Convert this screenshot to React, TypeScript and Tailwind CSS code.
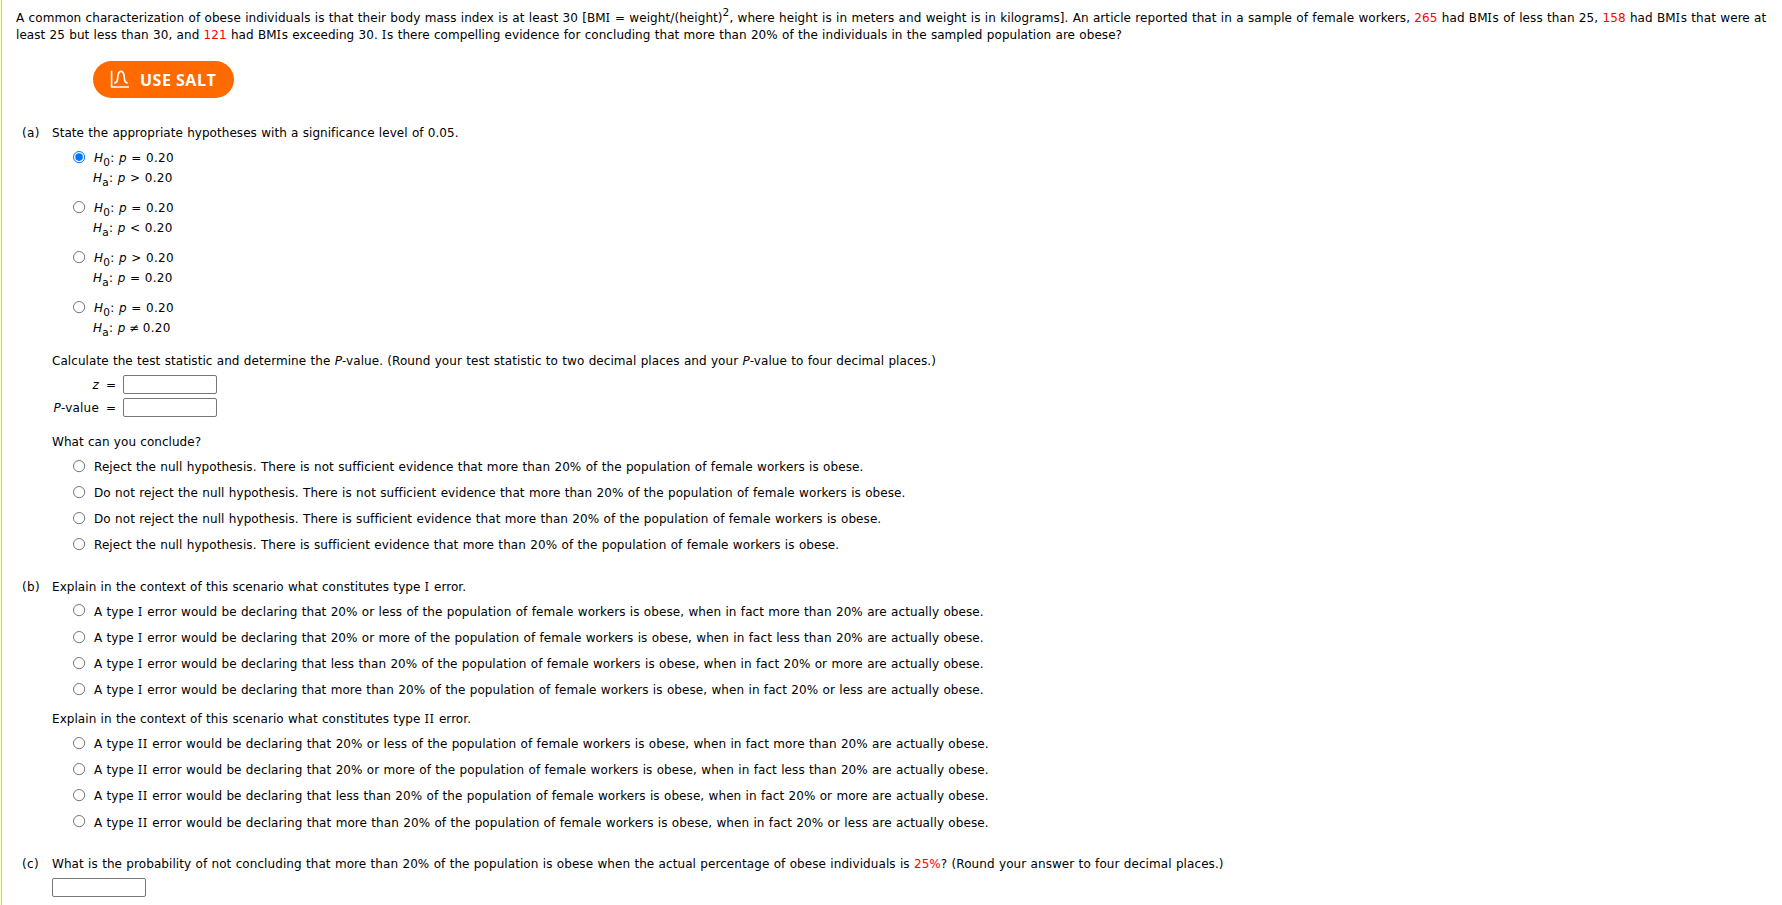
import { Fragment, type ReactNode } from "react";

function Serifed({ text }: { text: string }) {
  const parts = text.split("I");
  return (
    <>
      {parts.map((part, i) => (
        <Fragment key={i}>
          {i > 0 && <span className="font-['Noto_Sans'] tracking-[0.9px] leading-none">I</span>}
          {part}
        </Fragment>
      ))}
    </>
  );
}

function Line({ className = "", children }: { className?: string; children: ReactNode }) {
  return <div className={`h-[17px] whitespace-nowrap ${className}`}>{children}</div>;
}

function Radio({ checked = false, className = "" }: { checked?: boolean; className?: string }) {
  return (
    <svg className={`w-[13px] h-[13px] shrink-0 ${className}`} viewBox="0 0 13 13">
      <circle cx="6.1" cy="6.1" r="5.6" fill="#fff" stroke={checked ? "#0075ff" : "#767676"} strokeWidth="1" />
      {checked && <circle cx="6.1" cy="6.1" r="3.8" fill="#0075ff" />}
    </svg>
  );
}

function Choice({ text, className = "", radioClass = "mt-px" }: { text: string; className?: string; radioClass?: string }) {
  return (
    <div className={`flex h-[17px] pl-[21px] ${className}`}>
      <Radio className={radioClass} />
      <Line className="pl-2">
        <Serifed text={text} />
      </Line>
    </div>
  );
}

function Hypothesis({ sub, op }: { sub: string; op: string }) {
  return (
    <Line className="tracking-[0.25px]">
      <i>H</i>
      <sub className="text-[10.5px] bottom-[-4px]">{sub}</sub>: <i>p</i>{" "}
      <span className={op === "≠" ? "-mx-px" : ""}>{op}</span> 0.20
    </Line>
  );
}

function HypothesisPair({ ops, checked }: { ops: [string, string]; checked?: boolean }) {
  return (
    <div className="flex h-[50px] pl-[21px]">
      <Radio checked={checked} className="mt-px" />
      <div className="flex flex-col gap-[3px] pl-[7px]">
        <div className="pl-px">
          <Hypothesis sub="0" op={ops[0]} />
        </div>
        <Hypothesis sub="a" op={ops[1]} />
      </div>
    </div>
  );
}

function Part({ label, className = "", children }: { label: string; className?: string; children: ReactNode }) {
  return (
    <section className={`flex ${className}`}>
      <div className="w-[30px] shrink-0 tracking-[0.4px]">{label}</div>
      <div>{children}</div>
    </section>
  );
}

function Field({ className = "" }: { className?: string }) {
  return (
    <input
      aria-label="answer"
      className={`block w-[94px] h-[19px] rounded-[2px] border border-[#767676] bg-white ${className}`}
    />
  );
}

const hypotheses: [string, string][] = [
  ["=", ">"],
  ["=", "<"],
  [">", "="],
  ["=", "≠"],
];

const conclusions = [
  "Reject the null hypothesis. There is not sufficient evidence that more than 20% of the population of female workers is obese.",
  "Do not reject the null hypothesis. There is not sufficient evidence that more than 20% of the population of female workers is obese.",
  "Do not reject the null hypothesis. There is sufficient evidence that more than 20% of the population of female workers is obese.",
  "Reject the null hypothesis. There is sufficient evidence that more than 20% of the population of female workers is obese.",
];

const errorCases = [
  "20% or less of the population of female workers is obese, when in fact more than 20% are actually obese.",
  "20% or more of the population of female workers is obese, when in fact less than 20% are actually obese.",
  "less than 20% of the population of female workers is obese, when in fact 20% or more are actually obese.",
  "more than 20% of the population of female workers is obese, when in fact 20% or less are actually obese.",
];

function Red({ children }: { children: ReactNode }) {
  return <span className="text-[#ff0000]">{children}</span>;
}

export default function App() {
  return (
    <div className="flex h-[905px] overflow-hidden bg-white text-black font-['DejaVu_Sans',sans-serif] text-[12px] leading-[17px] tracking-[0.08px] [word-spacing:0.4px]">
      <div className="w-[2px] shrink-0 border-r border-[#c8c8b4] bg-[#ffffcc]" />
      <main className="pl-[14px] pt-[10px]">
        <Line className="tracking-[0.075px]">
          <Serifed text="A common characterization of obese individuals is that their body mass index is at least 30 [BMI = weight/(height)" />
          <sup className="text-[10.5px] top-[-6px]">2</sup>
          <Serifed text=", where height is in meters and weight is in kilograms]. An article reported that in a sample of female workers, " />
          <Red>265</Red>
          <Serifed text=" had BMIs of less than 25, " />
          <Red>158</Red>
          <Serifed text=" had BMIs that were at" />
        </Line>
        <Line className="tracking-[0.055px]">
          least 25 but less than 30, and <Red>121</Red>
          <Serifed text=" had BMIs exceeding 30. Is there compelling evidence for concluding that more than 20% of the individuals in the sampled population are obese?" />
        </Line>

        <button className="mt-[17px] ml-[77px] flex h-[37px] w-[141px] items-center rounded-full bg-[#ff6a00] pl-[17px] text-white">
          <svg className="w-[20px] h-[19px]" viewBox="0 0 20 19" fill="none" stroke="white" strokeWidth="1.6">
            <path d="M1.6 0.8v16.2H19" />
            <path d="M4.3 12.9c2.7 0 3.2-1.6 3.4-5 .2-4.400.9-6.500 3.300-6.500s3.100 2.100 3.300 6.500c.2 3.400.7 5 3.400 5" />
          </svg>
          <span className="ml-[10px] pt-[2px] whitespace-nowrap font-['Open_Sans'] text-[16px] font-bold tracking-[0.5px]">USE SALT</span>
        </button>

        <Part label="(a)" className="mt-[27px] pl-[6px]">
          <Line className="tracking-[0.05px]">State the appropriate hypotheses with a significance level of 0.05.</Line>
          <div className="mt-2">
            {hypotheses.map((ops, i) => (
              <HypothesisPair key={i} ops={ops} checked={i === 0} />
            ))}
          </div>
          <Line className="mt-[3px] tracking-[0.065px]">
            Calculate the test statistic and determine the <i>P</i>-value. (Round your test statistic to two decimal places and your <i>P</i>-value to four decimal places.)
          </Line>
          <div className="mt-[5px] flex h-[19px]">
            <div className="w-[47px] pt-[2px] text-right"><i>z</i></div>
            <div className="w-[24px] pl-[7px] pt-[2px]">=</div>
            <Field />
          </div>
          <div className="mt-1 flex h-[19px]">
            <div className="w-[47px] pt-[2px] text-right tracking-[0.2px]"><i>P</i>-value</div>
            <div className="w-[24px] pl-[7px] pt-[2px]">=</div>
            <Field />
          </div>
          <Line className="mt-[17px] tracking-[0.04px]">What can you conclude?</Line>
          <div className="mt-2 flex flex-col gap-[9px]">
            {conclusions.map((text) => (
              <Choice key={text} text={text} />
            ))}
          </div>
        </Part>

        <Part label="(b)" className="mt-[25px] pl-[6px]">
          <Line className="tracking-[0.06px]"><Serifed text="Explain in the context of this scenario what constitutes type I error." /></Line>
          <div className="mt-2 flex flex-col gap-[9px]">
            {errorCases.map((text, i) => (
              <Choice
                key={text}
                text={`A type I error would be declaring that ${text}`}
                radioClass={i === 0 ? "mt-0" : "mt-px"}
              />
            ))}
          </div>
          <Line className="mt-3 tracking-[0.06px]"><Serifed text="Explain in the context of this scenario what constitutes type II error." /></Line>
          <div className="mt-2 flex flex-col gap-[9px]">
            {errorCases.map((text, i) => (
              <Choice
                key={text}
                text={`A type II error would be declaring that ${text}`}
                className={i === 3 ? "mt-px" : ""}
                radioClass={i === 3 ? "mt-0" : "mt-px"}
              />
            ))}
          </div>
        </Part>

        <Part label="(c)" className="mt-6 pl-[6px]">
          <Line className="tracking-[0.075px]">
            What is the probability of not concluding that more than 20% of the population is obese when the actual percentage of obese individuals is <Red>25%</Red>? (Round your answer to four decimal places.)
          </Line>
          <Field className="mt-[5px]" />
        </Part>
      </main>
    </div>
  );
}
